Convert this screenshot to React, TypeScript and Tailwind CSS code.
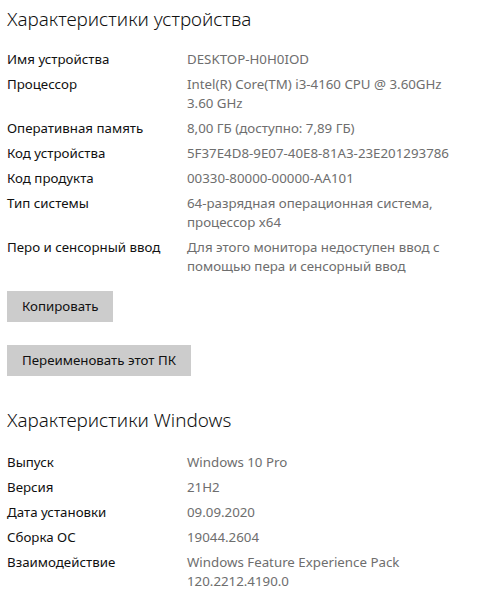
const deviceRows: [string, string[]][] = [
  ['Имя устройства', ['DESKTOP-H0H0IOD']],
  ['Процессор', ['Intel(R) Core(TM) i3-4160 CPU @ 3.60GHz', '3.60 GHz']],
  ['Оперативная память', ['8,00 ГБ (доступно: 7,89 ГБ)']],
  ['Код устройства', ['5F37E4D8-9E07-40E8-81A3-23E201293786']],
  ['Код продукта', ['00330-80000-00000-AA101']],
  ['Тип системы', ['64-разрядная операционная система,', 'процессор x64']],
  ['Перо и сенсорный ввод', ['Для этого монитора недоступен ввод с', 'помощью пера и сенсорный ввод']],
];

const windowsRows: [string, string[]][] = [
  ['Выпуск', ['Windows 10 Pro']],
  ['Версия', ['21H2']],
  ['Дата установки', ['09.09.2020']],
  ['Сборка ОС', ['19044.2604']],
  ['Взаимодействие', ['Windows Feature Experience Pack', '120.2212.4190.0']],
];

function InfoRows({ rows }: { rows: [string, string[]][] }) {
  return (
    <div className="flex flex-col gap-[6px]">
      {rows.map(([label, value]) => (
        <div key={label} className="flex text-[13.3px] leading-[19px]">
          <div className="w-[180px] text-[#111111]">{label}</div>
          <div className="text-[#6e6e6e]">
            {value.map((line) => (
              <div key={line}>{line}</div>
            ))}
          </div>
        </div>
      ))}
    </div>
  );
}

export default function App() {
  return (
    <div className="min-h-[601px] bg-white px-[7px] pt-[5px] font-['Noto_Sans',sans-serif]">
      <h1 className="text-[18.9px] font-light leading-[28px] text-[#111111]">Характеристики устройства</h1>
      <div className="mt-[17px]">
        <InfoRows rows={deviceRows} />
      </div>
      <button className="mt-[15px] block h-[31px] bg-[#cccccc] px-[15px] text-[13.3px] text-[#111111]">
        Копировать
      </button>
      <button className="mt-[23px] block h-[31px] bg-[#cccccc] px-[15px] text-[13.3px] text-[#111111]">
        Переименовать этот ПК
      </button>
      <h1 className="mt-[30px] text-[18.9px] font-light leading-[28px] text-[#111111]">Характеристики Windows</h1>
      <div className="mt-[19px]">
        <InfoRows rows={windowsRows} />
      </div>
    </div>
  );
}
